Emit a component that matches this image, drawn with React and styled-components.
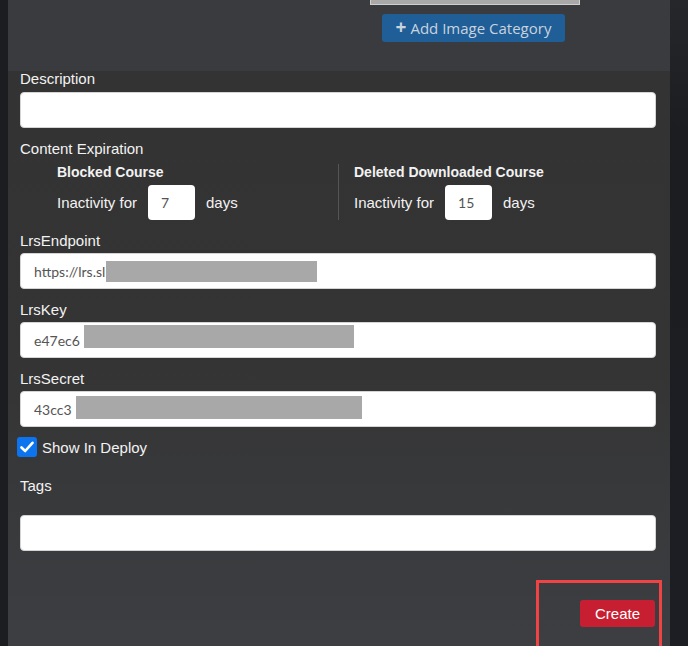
import React from "react";
import styled, { createGlobalStyle } from "styled-components";

const GlobalStyle = createGlobalStyle`
  html, body {
    margin: 0;
    padding: 0;
    background: #1d1e22;
  }
  * {
    box-sizing: border-box;
  }
`;

function TextField({ value, redact }) {
  return (
    <Input>
      {value && <InputText>{value}</InputText>}
      {redact && (
        <Redact
          style={{ left: redact.x, top: redact.y, width: redact.w, height: redact.h }}
        />
      )}
    </Input>
  );
}

function ExpiryColumn({ title, days, divided }) {
  return (
    <ExpiryCol divided={divided}>
      <ExpiryTitle>{title}</ExpiryTitle>
      <ExpiryRow>
        <span>Inactivity for</span>
        <DaysBox>{days}</DaysBox>
        <span>days</span>
      </ExpiryRow>
    </ExpiryCol>
  );
}

export default function App() {
  return (
    <>
      <GlobalStyle />
      <Page>
        <EdgeLeft />
        <Main>
          <Header>
            <ImageBox />
            <AddButton>
              <Plus>+</Plus>Add Image Category
            </AddButton>
          </Header>
          <Panel>
            <Label>Description</Label>
            <TextField />

            <Label top={12}>Content Expiration</Label>
            <ExpiryGrid>
              <ExpiryColumn title="Blocked Course" days="7" />
              <ExpiryColumn title="Deleted Downloaded Course" days="15" divided />
            </ExpiryGrid>

            <Label top={12}>LrsEndpoint</Label>
            <TextField value="https://lrs.sl" redact={{ x: 85, y: 7, w: 211, h: 21 }} />

            <Label top={12}>LrsKey</Label>
            <TextField value="e47ec6" redact={{ x: 63, y: 2, w: 270, h: 23 }} />

            <Label top={12}>LrsSecret</Label>
            <TextField value="43cc3" redact={{ x: 55, y: 4, w: 286, h: 23 }} />

            <CheckRow>
              <CheckBox>
                <svg width="14" height="12" viewBox="0 0 14 12">
                  <path
                    d="M1.5 6.5 L5.2 10 L12.5 1.8"
                    fill="none"
                    stroke="#fff"
                    strokeWidth="2.6"
                    strokeLinecap="round"
                    strokeLinejoin="round"
                  />
                </svg>
              </CheckBox>
              <span>Show In Deploy</span>
            </CheckRow>

            <Label top={20}>Tags</Label>
            <Spacer />
            <TextField />

            <Footer>
              <Highlight>
                <CreateButton>Create</CreateButton>
              </Highlight>
            </Footer>
          </Panel>
        </Main>
        <EdgeRight />
      </Page>
    </>
  );
}

const Page = styled.div`
  display: flex;
  width: 688px;
  height: 646px;
  overflow: hidden;
  font-family: "Liberation Sans", Arial, sans-serif;
`;

const EdgeLeft = styled.div`
  width: 8px;
  background: #1c1d21;
`;

const EdgeRight = styled.div`
  width: 18px;
  background: linear-gradient(#26272b, #1c1d21 20%, #1c1e23);
`;

const Main = styled.div`
  flex: 1;
  display: flex;
  flex-direction: column;
`;

const Header = styled.div`
  height: 71px;
  flex-shrink: 0;
  background: #3a3b3e;
  display: flex;
  flex-direction: column;
  align-items: flex-start;
  padding-left: 362px;
`;

const ImageBox = styled.div`
  width: 210px;
  height: 5px;
  background: #a9a9a9;
  border: 1px solid #cfcfcf;
  border-top: none;
`;

const AddButton = styled.div`
  margin-top: 9px;
  margin-left: 12px;
  width: 183px;
  height: 28px;
  border-radius: 3px;
  background: #1f5e97;
  color: #c9d3de;
  font-family: "Open Sans", sans-serif;
  font-size: 15px;
  display: flex;
  align-items: center;
  justify-content: center;
  gap: 4px;
`;

const Plus = styled.span`
  font-weight: 700;
  font-size: 19px;
  line-height: 1;
  margin-top: -2px;
`;

const Panel = styled.div`
  flex: 1;
  background: linear-gradient(#333333, #343434 50%, #3d3f43);
  padding: 0 14px 0 12px;
  display: flex;
  flex-direction: column;
  color: #f2f2f2;
`;

const Label = styled.div`
  font-size: 15px;
  line-height: 17px;
  margin-top: ${(p) => p.top || 0}px;
  margin-bottom: 4px;
  &:first-child {
    margin-top: -1px;
    margin-bottom: 5px;
  }
`;

const Input = styled.div`
  position: relative;
  flex-shrink: 0;
  height: 36px;
  background: #fff;
  border: 1px solid #d4d4d4;
  border-radius: 4px;
  display: flex;
  align-items: center;
  padding-left: 13px;
  color: #555;
  font-family: Lato, sans-serif;
  font-size: 14px;
`;

const InputText = styled.span`
  white-space: nowrap;
`;

const Redact = styled.span`
  position: absolute;
  background: #a8a8a8;
`;

const ExpiryGrid = styled.div`
  display: grid;
  grid-template-columns: 281px 1fr;
  padding-left: 37px;
  margin-top: 3px;
`;

const ExpiryCol = styled.div`
  display: flex;
  flex-direction: column;
  gap: 4px;
  padding-left: ${(p) => (p.divided ? "15px" : "0")};
  border-left: ${(p) => (p.divided ? "1px solid #555" : "none")};
`;

const ExpiryTitle = styled.div`
  font-weight: 700;
  font-size: 14px;
  line-height: 17px;
`;

const ExpiryRow = styled.div`
  display: flex;
  align-items: center;
  font-size: 15px;
  gap: 11px;
`;

const DaysBox = styled.div`
  width: 47px;
  height: 35px;
  background: #fff;
  border-radius: 4px;
  color: #555;
  font-family: Lato, sans-serif;
  font-size: 14px;
  display: flex;
  align-items: center;
  padding-left: 13px;
`;

const CheckRow = styled.div`
  display: flex;
  align-items: center;
  gap: 5px;
  margin-top: 10px;
  margin-left: -3px;
  font-size: 15px;
`;

const CheckBox = styled.div`
  width: 20px;
  height: 20px;
  border-radius: 3px;
  background: #0d74f0;
  display: flex;
  align-items: center;
  justify-content: center;
`;

const Spacer = styled.div`
  height: 17px;
`;

const Footer = styled.div`
  flex: 1;
  display: flex;
  justify-content: flex-end;
  align-items: flex-start;
  padding-top: 29px;
  margin-right: -6px;
`;

const Highlight = styled.div`
  width: 126px;
  height: 80px;
  flex-shrink: 0;
  border: 3px solid #f04343;
  padding: 17px 4px 0 0;
  display: flex;
  justify-content: flex-end;
  align-items: flex-start;
`;

const CreateButton = styled.div`
  width: 75px;
  height: 27px;
  border-radius: 3px;
  background: #c71f31;
  color: #fff;
  font-size: 15px;
  display: flex;
  align-items: center;
  justify-content: center;
`;
